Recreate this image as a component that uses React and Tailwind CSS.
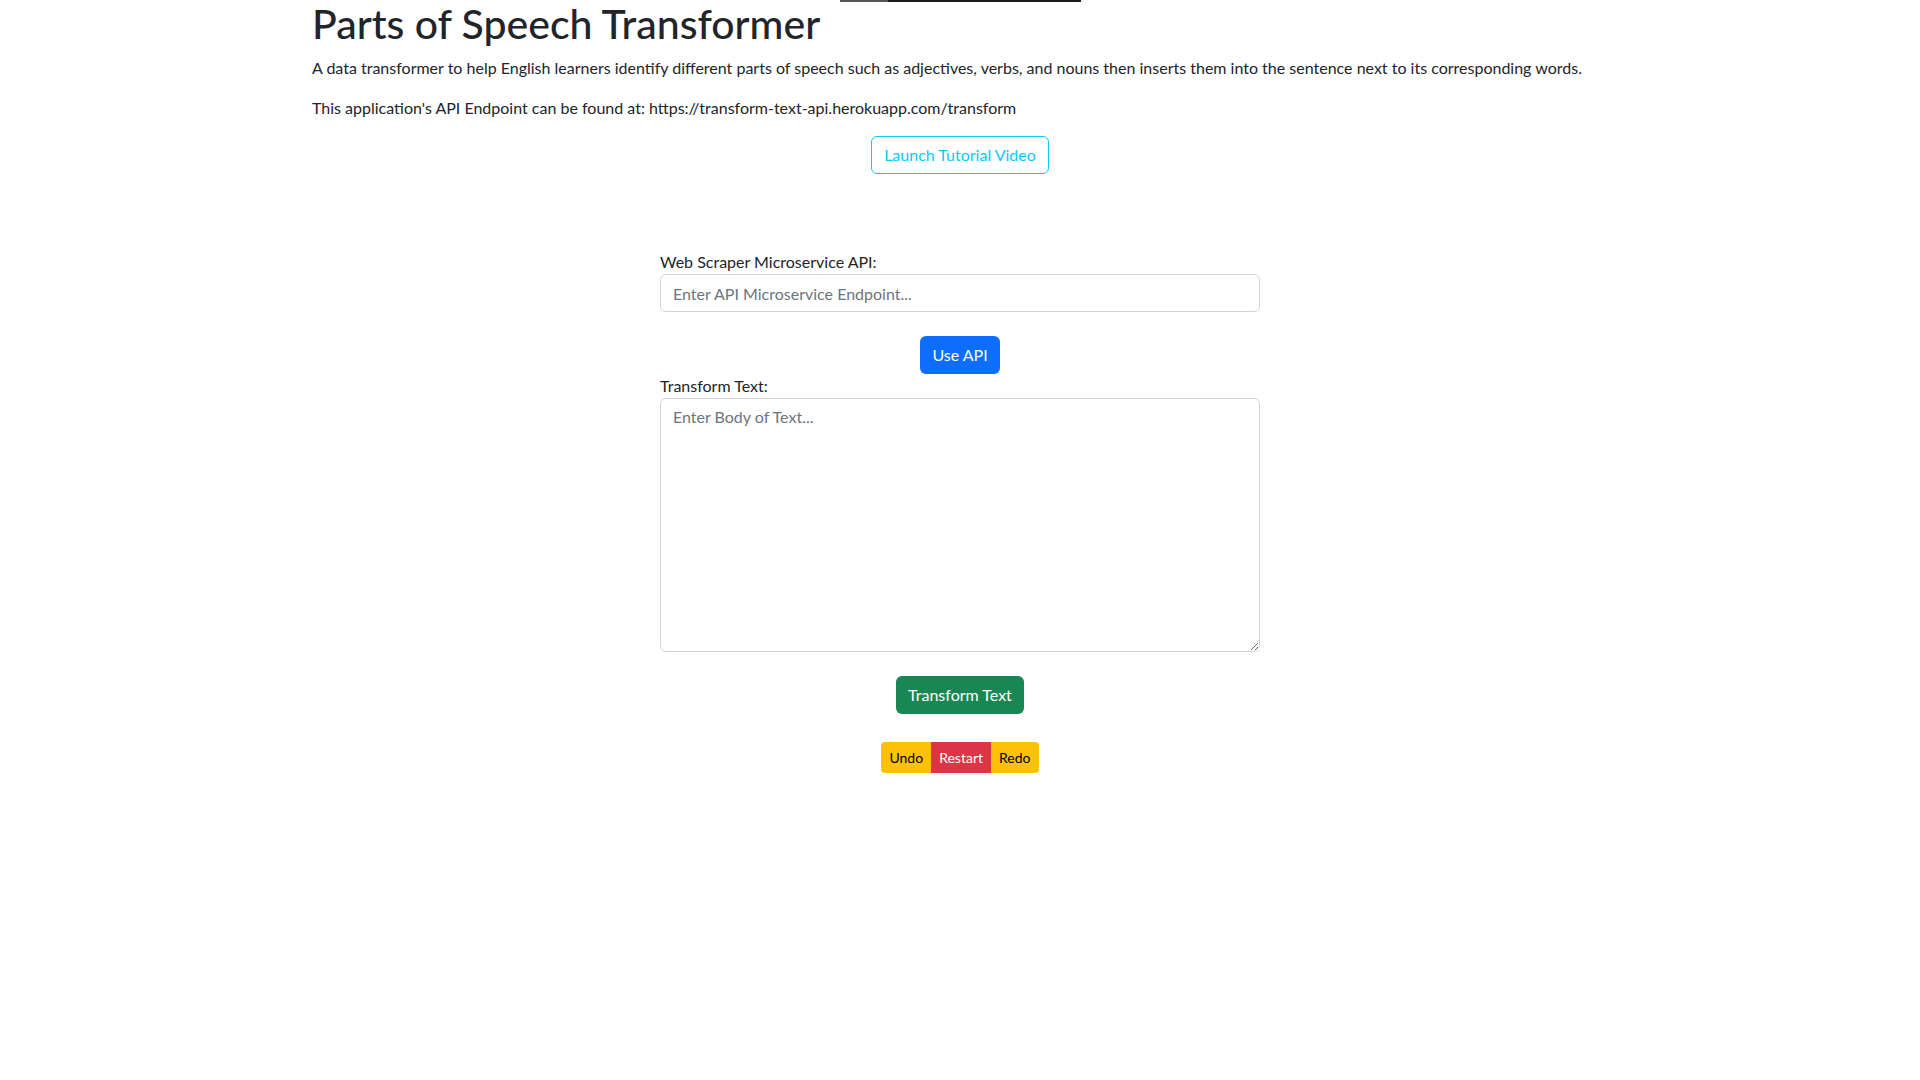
import { useState } from 'react'

const font = { fontFamily: '"Segoe UI", Lato, "Liberation Sans", sans-serif' }

export default function App() {
  const [endpoint, setEndpoint] = useState('')
  const [body, setBody] = useState('')

  return (
    <div className="min-h-screen bg-white text-[#212529] text-base leading-6" style={font}>
      {/* bottom edge of the cut-off video frame */}
      <div className="flex justify-center">
        <div className="flex h-[2px] w-[241px]">
          <div className="w-[48px] bg-[#555]" />
          <div className="flex-1 bg-[#1a1a1a]" />
        </div>
      </div>

      <div className="mx-auto max-w-[1320px] px-3">
        <h1 className="-mt-[2px] mb-2 text-[41px] font-medium leading-[48px]">Parts of Speech Transformer</h1>
        <p className="mb-4">
          A data transformer to help English learners identify different parts of speech such as adjectives, verbs, and nouns then inserts them into the sentence next to its corresponding words.
        </p>
        <p className="mb-4">
          This application's API Endpoint can be found at: https://transform-text-api.herokuapp.com/transform
        </p>

        <div className="flex justify-center">
          <button className="h-[38px] rounded-md border border-[#0dcaf0] px-3 text-[#0dcaf0] hover:bg-[#0dcaf0] hover:text-black">
            Launch Tutorial Video
          </button>
        </div>

        <div className="mx-auto mt-[76px] w-[600px]">
          <label className="block">Web Scraper Microservice API:</label>
          <input
            value={endpoint}
            onChange={(e) => setEndpoint(e.target.value)}
            placeholder="Enter API Microservice Endpoint..."
            className="block h-[38px] w-full rounded-md border border-[#ced4da] px-3 py-1.5 outline-none placeholder:text-[#6c757d]"
          />
          <div className="mt-6 flex justify-center">
            <button className="h-[38px] rounded-md bg-[#0d6efd] px-3 text-white">Use API</button>
          </div>
          <label className="block">Transform Text:</label>
          <textarea
            value={body}
            onChange={(e) => setBody(e.target.value)}
            placeholder="Enter Body of Text..."
            className="block h-[254px] w-full rounded-md border border-[#ced4da] px-3 py-1.5 outline-none placeholder:text-[#6c757d]"
          />
          <div className="mt-6 flex justify-center">
            <button className="h-[38px] rounded-md bg-[#198754] px-3 text-white">Transform Text</button>
          </div>
          <div className="mt-7 flex justify-center">
            <div className="flex overflow-hidden rounded">
              <button className="h-[31px] bg-[#ffc107] px-2 text-sm text-black">Undo</button>
              <button className="h-[31px] bg-[#dc3545] px-2 text-sm text-white">Restart</button>
              <button className="h-[31px] bg-[#ffc107] px-2 text-sm text-black">Redo</button>
            </div>
          </div>
        </div>
      </div>
    </div>
  )
}
